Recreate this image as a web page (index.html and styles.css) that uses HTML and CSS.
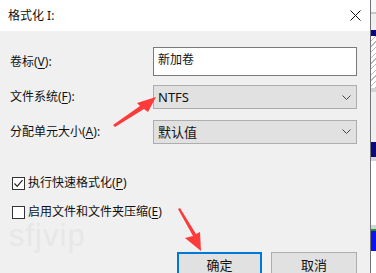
FILE: index.html
```html
<!DOCTYPE html>
<html lang="zh-CN">
<head>
    <meta charset="UTF-8">
    <meta name="viewport" content="width=device-width, initial-scale=1.0">
    <title>格式化 I:</title>
    <link rel="stylesheet" href="styles.css">
</head>
<body>

<div class="screen">
    <div class="dialog">
        <div class="titlebar">
            <span class="title">格式化 I:</span>
            <svg class="close" width="11" height="11" viewBox="0 0 11 11">
                <path d="M0.5 0.5 L10.5 10.5 M10.5 0.5 L0.5 10.5" stroke="#111" stroke-width="1"/>
            </svg>
        </div>

        <div class="body">
            <div class="form">
                <label class="label">卷标(<u>V</u>):</label>
                <div class="input">新加卷</div>

                <label class="label">文件系统(<u>F</u>):</label>
                <div class="select">
                    <span>NTFS</span>
                    <svg width="9" height="5" viewBox="0 0 9 5"><path d="M0.5 0.5 L4.5 4.5 L8.5 0.5" fill="none" stroke="#444" stroke-width="1"/></svg>
                </div>

                <label class="label row-3">分配单元大小(<u>A</u>):</label>
                <div class="select row-3">
                    <span>默认值</span>
                    <svg width="9" height="5" viewBox="0 0 9 5"><path d="M0.5 0.5 L4.5 4.5 L8.5 0.5" fill="none" stroke="#444" stroke-width="1"/></svg>
                </div>
            </div>

            <div class="check first">
                <span class="box">
                    <svg width="11" height="11" viewBox="0 0 11 11"><path d="M1.5 5.5 L4.2 8.3 L9.5 2.2" fill="none" stroke="#222" stroke-width="1.2"/></svg>
                </span>
                <span>执行快速格式化(<u>P</u>)</span>
            </div>
            <div class="check">
                <span class="box"></span>
                <span>启用文件和文件夹压缩(<u>E</u>)</span>
            </div>

            <div class="buttons">
                <div class="btn primary">确定</div>
                <div class="btn">取消</div>
            </div>
        </div>

        <div class="watermark">sfjvip</div>

        <svg class="arrow" width="370" height="273" viewBox="0 0 370 273">
            <polygon points="113,125 140,106 137,103 156,97 148,112 144,109 115,127" fill="#ff3a3a"/>
            <polygon points="178,209 193,236 185,238 201,251 200,232 196,234 180,208" fill="#ff3a3a"/>
        </svg>
    </div>

    <div class="side">
        <div class="s-top"></div>
        <div class="s-line"></div>
        <div class="s-gap"></div>
        <div class="s-navy"></div>
        <div class="s-hatch"></div>
        <div class="s-grey"></div>
        <div class="s-light"></div>
        <div class="s-navy tall"></div>
        <div class="s-grey"></div>
        <div class="s-white"></div>
        <div class="s-grey"></div>
        <div class="s-green"></div>
        <div class="s-blue"></div>
    </div>
</div>

</body>
</html>
```

FILE: styles.css
```css
body {
    margin: 0;
    font-family: "Noto Sans", "Noto Sans CJK SC", sans-serif;
    font-size: 12px;
    color: #111;
    background-color: #fff;
}
u {
    text-decoration-thickness: 1px;
    text-underline-offset: 2px;
}
.screen {
    display: flex;
    height: 273px;
    overflow: hidden;
}
.dialog {
    position: relative;
    width: 370px;
    flex-shrink: 0;
    background-color: #f0f0f0;
    border-right: 1px solid #6f7378;
}
.titlebar {
    height: 31px;
    display: flex;
    align-items: center;
    justify-content: space-between;
    padding: 0 9px 0 8px;
    background-color: #fff;
    line-height: 16px;
}
.title {
    margin-top: 1px;
}
.body {
    padding: 16px 13px 0 10px;
}
.form {
    display: grid;
    grid-template-columns: 143px 204px;
    grid-template-rows: 29px 24px 24px;
    row-gap: 9px;
    align-items: center;
}
.row-3 {
    margin-top: 3px;
}
.label {
    line-height: 16px;
}
.input {
    height: 29px;
    box-sizing: border-box;
    padding: 4px 4px 0;
    background-color: #fff;
    border: 1px solid #7a7a7a;
    line-height: 16px;
}
.select {
    height: 24px;
    box-sizing: border-box;
    display: flex;
    align-items: center;
    justify-content: space-between;
    padding: 0 5px 0 4px;
    background-color: #e1e1e1;
    border: 1px solid #adadad;
    line-height: 16px;
}
.select span {
    font-size: 13px;
}
.check {
    display: flex;
    align-items: center;
    gap: 3px;
    margin-top: 15px;
    padding-left: 2px;
    line-height: 14px;
}
.check.first {
    margin-top: 34px;
}
.box {
    width: 13px;
    height: 13px;
    box-sizing: border-box;
    border: 1px solid #333;
    background-color: #fff;
    display: flex;
    align-items: center;
    justify-content: center;
}
.buttons {
    display: flex;
    justify-content: flex-end;
    gap: 9px;
    margin-top: 33px;
}
.btn {
    width: 86px;
    height: 24px;
    box-sizing: border-box;
    display: flex;
    align-items: center;
    justify-content: center;
    background-color: #e1e1e1;
    border: 1px solid #adadad;
    font-size: 13px;
}
.btn.primary {
    width: 85px;
    border: 2px solid #0078d7;
}
.watermark {
    position: absolute;
    left: 9px;
    top: 218px;
    font-family: "Liberation Sans", Arial, sans-serif;
    font-size: 31px;
    color: #e7e7e7;
    letter-spacing: 1px;
}
.arrow {
    position: absolute;
    left: 0;
    top: 0;
}
.side {
    flex: 1;
    display: flex;
    flex-direction: column;
    background-color: #fff;
}
.s-top {
    height: 12px;
    background-color: #f8f8f8;
}
.s-line {
    height: 2px;
    background-color: #c8c8c8;
}
.s-gap {
    height: 16px;
    background-color: #f0f0f0;
}
.s-navy {
    height: 6px;
    background-color: #0a0a7c;
}
.s-navy.tall {
    height: 15px;
}
.s-hatch {
    height: 52px;
    background: repeating-linear-gradient(135deg, #fff 0 3px, #b8b8b8 3px 4px);
}
.s-grey {
    height: 4px;
    background-color: #d4d4d4;
}
.s-light {
    height: 50px;
    background-color: #f0f0f0;
}
.s-white {
    height: 64px;
    background-color: #fff;
}
.s-green {
    height: 2px;
    background-color: #1a9a1a;
}
.s-blue {
    height: 20px;
    background-color: #0a14f0;
}
```
